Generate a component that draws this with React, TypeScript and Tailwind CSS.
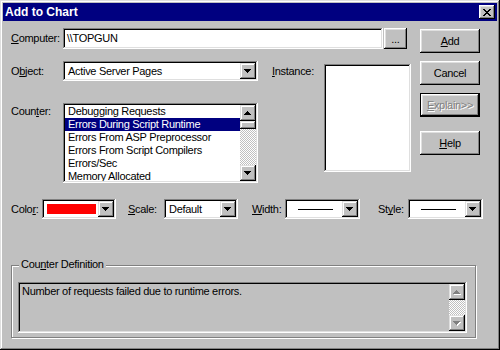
import React from 'react';

const counters = [
  'Debugging Requests',
  'Errors During Script Runtime',
  'Errors From ASP Preprocessor',
  'Errors From Script Compilers',
  'Errors/Sec',
  'Memory Allocated',
];

// 7x4 pixel arrows, like the classic scroll/combo glyphs
function Arrow({ up = false, disabled = false }: { up?: boolean; disabled?: boolean }) {
  const d = up
    ? 'M3 0h1v1H3zM2 1h3v1H2zM1 2h5v1H1zM0 3h7v1H0z'
    : 'M0 0h7v1H0zM1 1h5v1H1zM2 2h3v1H2zM3 3h1v1H3z';
  return (
    <svg width="8" height="5" viewBox="0 0 8 5" shapeRendering="crispEdges">
      {disabled && <path d={d} fill="#ffffff" transform="translate(1 1)" />}
      <path d={d} fill={disabled ? '#808080' : '#000000'} />
    </svg>
  );
}

function ArrowBtn({ up = false, disabled = false }: { up?: boolean; disabled?: boolean }) {
  return (
    <div className="w-[16px] h-[16px] shrink-0 bg-[#c0c0c0] flex items-center justify-center shadow-[inset_-1px_-1px_#000,inset_1px_1px_#dfdfdf,inset_-2px_-2px_#808080,inset_2px_2px_#fff]">
      <Arrow up={up} disabled={disabled} />
    </div>
  );
}

function Combo({ className, children }: { className: string; children: React.ReactNode }) {
  return (
    <div className={`${className} h-[20px] bg-white p-[2px] flex shadow-[inset_-1px_-1px_#fff,inset_1px_1px_#808080,inset_-2px_-2px_#dfdfdf,inset_2px_2px_#000]`}>
      <div className="flex-1 flex items-center pl-[3px] overflow-hidden whitespace-nowrap">{children}</div>
      <ArrowBtn />
    </div>
  );
}

function Button({ children, className = '' }: { children: React.ReactNode; className?: string }) {
  return (
    <div className={`w-[60px] h-[24px] flex items-center justify-center bg-[#c0c0c0] shadow-[inset_-1px_-1px_#000,inset_1px_1px_#fff,inset_-2px_-2px_#808080,inset_2px_2px_#dfdfdf] ${className}`}>
      {children}
    </div>
  );
}

function U({ children }: { children: React.ReactNode }) {
  return <span className="underline underline-offset-[1px] [text-decoration-skip-ink:none]">{children}</span>;
}

export default function App() {
  return (
    <div className="w-[500px] h-[350px] bg-[#c0c0c0] p-[3px] flex flex-col text-black text-[11px] leading-[13px] tracking-[-0.3px] font-['Liberation_Sans',Arial,sans-serif] shadow-[inset_-1px_-1px_#000,inset_1px_1px_#dfdfdf,inset_-2px_-2px_#808080,inset_2px_2px_#fff]">
      {/* Title bar */}
      <div className="h-[18px] bg-[#000080] flex items-center justify-between pl-[2px] pr-[2px]">
        <span className="text-white font-bold text-[12px] tracking-normal">Add to Chart</span>
        <div className="w-[16px] h-[14px] bg-[#c0c0c0] flex items-center justify-center shadow-[inset_-1px_-1px_#000,inset_1px_1px_#fff,inset_-2px_-2px_#808080,inset_2px_2px_#dfdfdf]">
          <svg width="8" height="7" viewBox="0 0 8 7" shapeRendering="crispEdges">
            <path
              d="M0 0h2v1H0zM6 0h2v1H6zM1 1h2v1H1zM5 1h2v1H5zM2 2h4v1H2zM3 3h2v1H3zM2 4h4v1H2zM1 5h2v1H1zM5 5h2v1H5zM0 6h2v1H0zM6 6h2v1H6z"
              fill="#000"
            />
          </svg>
        </div>
      </div>

      <div className="flex flex-col pl-[8px]">
        <div className="flex">
          {/* Left part */}
          <div className="w-[400px] flex flex-col">
            <div className="mt-[7px] h-[21px] flex items-center">
              <span className="w-[52px]"><U>C</U>omputer:</span>
              <div className="w-[320px] h-[21px] bg-white p-[2px] flex items-center pl-[4px] shadow-[inset_-1px_-1px_#fff,inset_1px_1px_#808080,inset_-2px_-2px_#dfdfdf,inset_2px_2px_#000]">
                \\TOPGUN
              </div>
              <div className="ml-[1px] w-[23px] h-[21px] flex items-center justify-center bg-[#c0c0c0] shadow-[inset_-1px_-1px_#000,inset_1px_1px_#fff,inset_-2px_-2px_#808080,inset_2px_2px_#dfdfdf]">
                <span className="mt-[2px]">...</span>
              </div>
            </div>

            <div className="mt-[12px] flex items-start">
              <div className="w-[247px] flex flex-col">
                <div className="h-[20px] flex items-center">
                  <span className="w-[52px]">O<U>b</U>ject:</span>
                  <Combo className="w-[195px]">Active Server Pages</Combo>
                </div>
                <div className="mt-[22px] flex items-start">
                  <span className="w-[52px] pt-[2px]">Coun<U>t</U>er:</span>
                  <div className="w-[195px] h-[80px] bg-white p-[2px] flex shadow-[inset_-1px_-1px_#fff,inset_1px_1px_#808080,inset_-2px_-2px_#dfdfdf,inset_2px_2px_#000]">
                    <div className="flex-1 flex flex-col overflow-hidden">
                      {counters.map((c, i) => (
                        <div
                          key={c}
                          className={`h-[13px] shrink-0 pl-[3px] whitespace-nowrap ${i === 1 ? 'bg-[#000080] text-white' : ''}`}
                        >
                          {c}
                        </div>
                      ))}
                    </div>
                    <div className="w-[16px] flex flex-col">
                      <ArrowBtn up />
                      <div className="flex-1 flex flex-col bg-[image:repeating-conic-gradient(#c0c0c0_0%_25%,#ffffff_0%_50%)] bg-size-[2px_2px]">
                        <div className="h-[8px] bg-[#c0c0c0] shadow-[inset_-1px_-1px_#000,inset_1px_1px_#dfdfdf,inset_-2px_-2px_#808080,inset_2px_2px_#fff]" />
                      </div>
                      <ArrowBtn />
                    </div>
                  </div>
                </div>
              </div>
              <span className="ml-[14px] w-[52px] mt-[4px]"><U>I</U>nstance:</span>
              <div className="mt-[3px] w-[87px] h-[108px] bg-white shadow-[inset_-1px_-1px_#fff,inset_1px_1px_#808080,inset_-2px_-2px_#dfdfdf,inset_2px_2px_#000]" />
            </div>
          </div>

          {/* Buttons */}
          <div className="ml-[9px] pt-[8px] flex flex-col">
            <Button><U>A</U>dd</Button>
            <Button className="mt-[8px]">Cancel</Button>
            <div className="mt-[8px] w-[60px] h-[24px] border border-black flex items-center justify-center bg-[#c0c0c0] text-[#808080] [text-shadow:1px_1px_#fff] shadow-[inset_-1px_-1px_#000,inset_1px_1px_#fff,inset_-2px_-2px_#808080,inset_2px_2px_#dfdfdf]">
              <span><U>E</U>xplain&gt;&gt;</span>
            </div>
            <Button className="mt-[14px]"><U>H</U>elp</Button>
          </div>
        </div>

        {/* Color / scale / width / style */}
        <div className="mt-[16px] h-[20px] flex items-center">
          <span className="w-[31px]">Colo<U>r</U>:</span>
          <div className="w-[74px] h-[20px] bg-white p-[2px] flex shadow-[inset_-1px_-1px_#fff,inset_1px_1px_#808080,inset_-2px_-2px_#dfdfdf,inset_2px_2px_#000]">
            <div className="flex-1 flex items-center pl-[3px]">
              <div className="w-[49px] h-[10px] bg-[#ff0000]" />
            </div>
            <ArrowBtn />
          </div>
          <span className="ml-[12px] w-[36px]"><U>S</U>cale:</span>
          <Combo className="w-[74px]">Default</Combo>
          <span className="ml-[14px] w-[33px]"><U>W</U>idth:</span>
          <Combo className="w-[75px]">
            <div className="ml-[8px] w-[35px] h-[1px] bg-black" />
          </Combo>
          <span className="ml-[18px] w-[30px]">St<U>y</U>le:</span>
          <Combo className="w-[75px]">
            <div className="ml-[8px] w-[35px] h-[1px] bg-black" />
          </Combo>
        </div>

        {/* Counter Definition group */}
        <div className="relative mt-[46px] w-[465px] h-[73px] border border-[#808080] shadow-[inset_1px_1px_#fff,1px_1px_#fff] pt-[16px] pl-[6px]">
          <span className="absolute left-[7px] top-[-8px] px-[2px] bg-[#c0c0c0]">Cou<U>n</U>ter Definition</span>
          <div className="w-[449px] h-[51px] bg-[#c0c0c0] p-[2px] flex shadow-[inset_-1px_-1px_#fff,inset_1px_1px_#808080,inset_-2px_-2px_#dfdfdf,inset_2px_2px_#000]">
            <div className="flex-1 pl-[2px] pt-[1px] whitespace-nowrap">Number of requests failed due to runtime errors.</div>
            <div className="w-[16px] flex flex-col">
              <ArrowBtn up disabled />
              <div className="flex-1 bg-[image:repeating-conic-gradient(#c0c0c0_0%_25%,#ffffff_0%_50%)] bg-size-[2px_2px]" />
              <ArrowBtn disabled />
            </div>
          </div>
        </div>
      </div>
    </div>
  );
}
